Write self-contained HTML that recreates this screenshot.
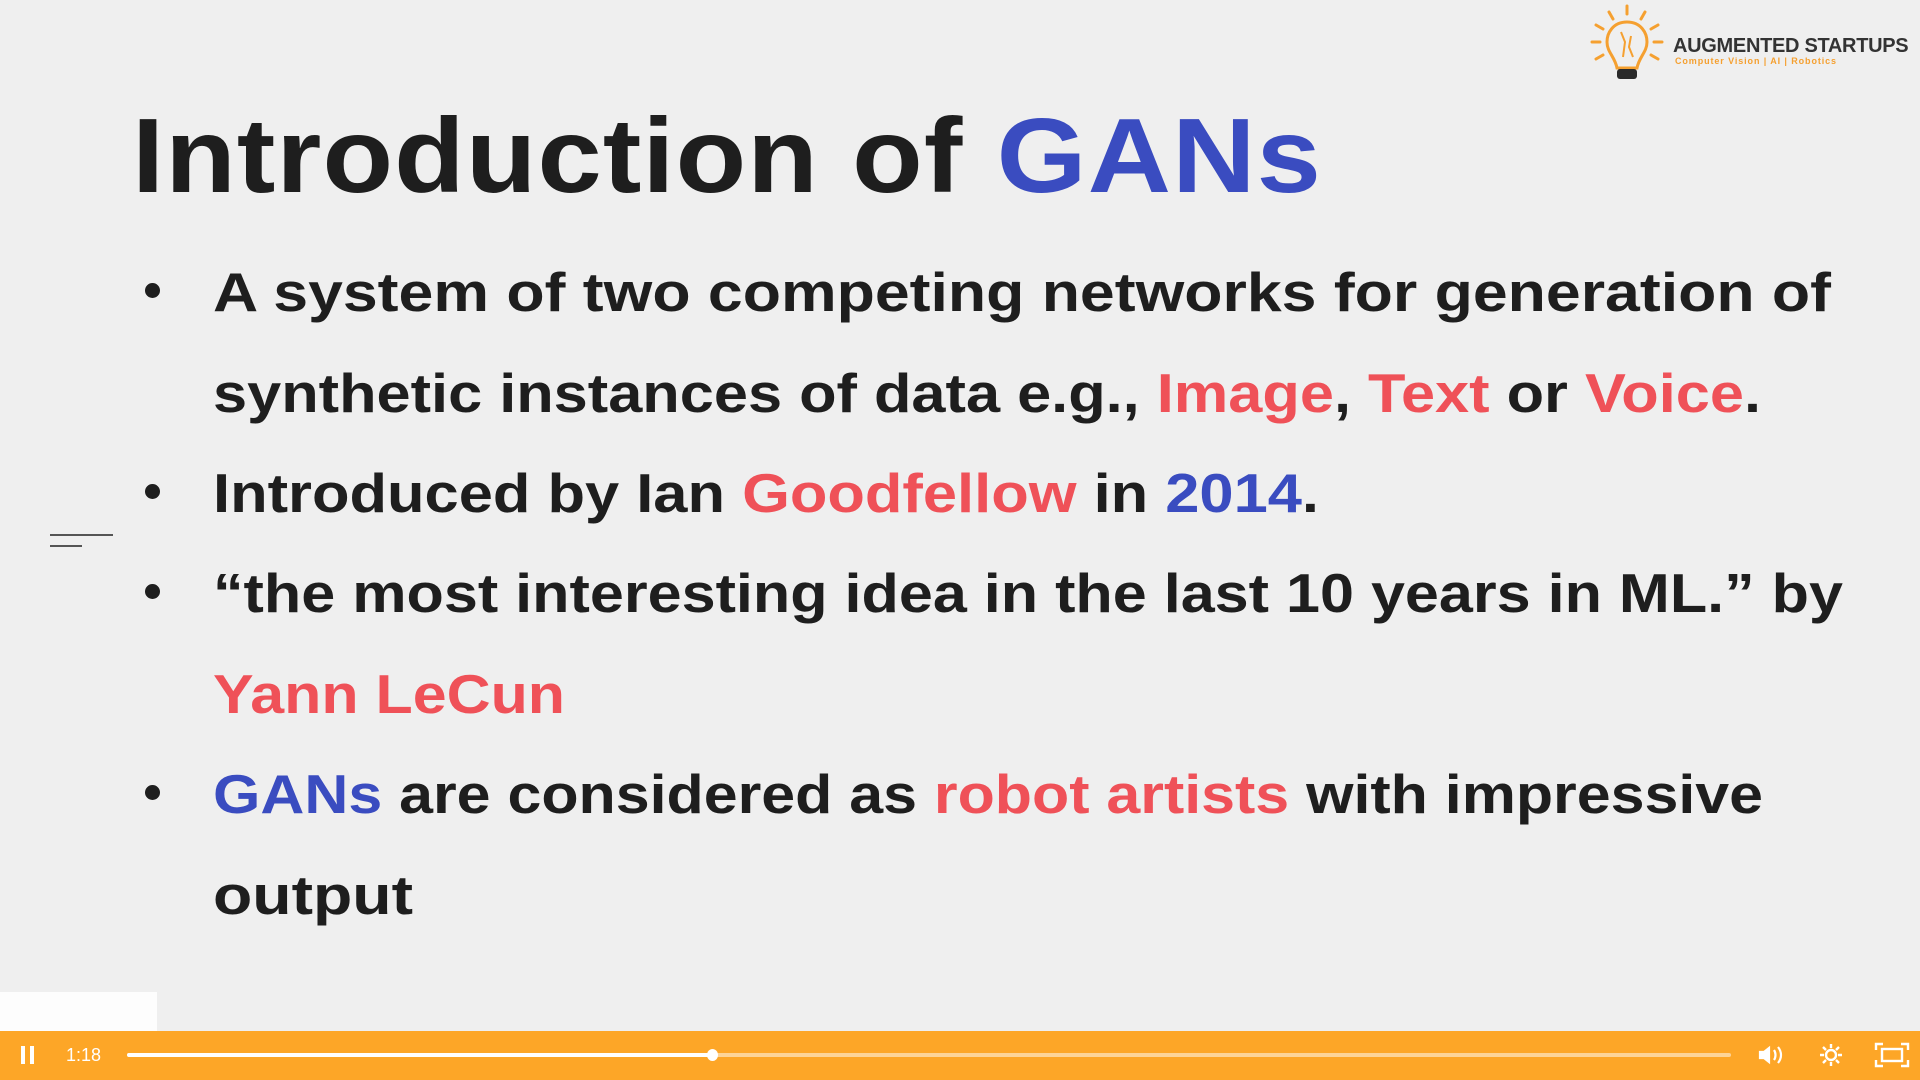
<!DOCTYPE html>
<html><head><meta charset="utf-8"><style>
*{margin:0;padding:0;box-sizing:border-box}
body{width:1920px;height:1080px;overflow:hidden;background:#efefef;position:relative;font-family:"Liberation Sans",sans-serif;font-weight:bold;color:#1e1e1e}
.l{position:absolute;white-space:nowrap;transform-origin:0 0}
.r{color:#ef5158}.b{color:#3a4cc0}
.dot{position:absolute;left:145px;width:15px;height:15px;border-radius:50%;background:#1e1e1e}
.t{font-size:55px;line-height:1}
</style></head><body>
<div class="l" id="title" data-w="1190" style="left:132px;top:103px;font-size:106px;line-height:1;letter-spacing:1px">Introduction of <span class="b">GANs</span></div>

<div class="dot" style="top:283px"></div>
<div class="dot" style="top:484px"></div>
<div class="dot" style="top:584px"></div>
<div class="dot" style="top:785px"></div>

<div class="l t" data-w="1618" style="left:213px;top:265px">A system of two competing networks for generation of</div>
<div class="l t" data-w="1548" style="left:213px;top:366px">synthetic instances of data e.g., <span class="r">Image</span>, <span class="r">Text</span> or <span class="r">Voice</span>.</div>
<div class="l t" data-w="1106" style="left:213px;top:466px">Introduced by Ian <span class="r">Goodfellow</span> in <span class="b">2014</span>.</div>
<div class="l t" data-w="1630" style="left:213px;top:566px">“the most interesting idea in the last 10 years in ML.” by</div>
<div class="l t r" data-w="352" style="left:213px;top:667px">Yann LeCun</div>
<div class="l t" data-w="1550" style="left:213px;top:767px"><span class="b">GANs</span> are considered as <span class="r">robot artists</span> with impressive</div>
<div class="l t" data-w="200" style="left:213px;top:868px">output</div>

<div style="position:absolute;left:50px;top:534px;width:63px;height:2px;background:#555"></div>
<div style="position:absolute;left:50px;top:545px;width:32px;height:2px;background:#555"></div>

<svg style="position:absolute;left:1585px;top:2px" width="90" height="86" viewBox="0 0 90 86">
<g stroke="#f5a030" stroke-width="3" stroke-linecap="round">
<line x1="42" y1="4" x2="42" y2="12"/><line x1="24" y1="10" x2="28" y2="17"/><line x1="60" y1="10" x2="56" y2="17"/>
<line x1="11" y1="23" x2="18" y2="27"/><line x1="73" y1="23" x2="66" y2="27"/><line x1="7" y1="40" x2="15" y2="40"/><line x1="77" y1="40" x2="69" y2="40"/>
<line x1="11" y1="57" x2="18" y2="53"/><line x1="73" y1="57" x2="66" y2="53"/></g>
<path d="M42 20 C28 20 22 31 22 40 C22 50 30 55 32 66 L52 66 C54 55 62 50 62 40 C62 31 56 20 42 20Z" fill="none" stroke="#f5a030" stroke-width="3"/>
<path d="M36 30 L40 40 L38 55 M46 34 L44 45 L48 55" stroke="#f5a030" stroke-width="2" fill="none"/>
<rect x="32" y="67" width="20" height="10" rx="3" fill="#2a2a2a"/>
</svg>
<div class="l" style="left:1673px;top:35px;font-size:20px;color:#333;letter-spacing:-0.3px">AUGMENTED STARTUPS</div>
<div class="l" style="left:1675px;top:56px;font-size:9px;color:#f5a030;letter-spacing:0.9px">Computer Vision | AI | Robotics</div>

<div style="position:absolute;left:0;top:992px;width:157px;height:40px;background:#fdfdfd"></div>

<div style="position:absolute;left:0;top:1031px;width:1920px;height:49px;background:#fda627"></div>
<div style="position:absolute;left:21px;top:1046px;width:4px;height:18px;background:#fff"></div>
<div style="position:absolute;left:30px;top:1046px;width:4px;height:18px;background:#fff"></div>
<div class="l" style="left:66px;top:1045px;font-size:18px;color:#fff;font-weight:normal">1:18</div>
<div style="position:absolute;left:127px;top:1053px;width:1604px;height:4px;background:#fdd497;border-radius:2px"></div>
<div style="position:absolute;left:127px;top:1053px;width:586px;height:4px;background:#fff;border-radius:2px"></div>
<div style="position:absolute;left:707px;top:1049px;width:11px;height:12px;border-radius:50%;background:#fff"></div>
<svg style="position:absolute;left:1758px;top:1043px" width="30" height="24" viewBox="0 0 30 24" fill="none" stroke="#fff" stroke-width="2.2"><path d="M2 9h4l5-4v14l-5-4H2z" fill="#fff"/><path d="M16 7c2 3 2 7 0 10M20 4c4 5 4 11 0 16"/></svg>
<svg style="position:absolute;left:1818px;top:1042px" width="26" height="26" viewBox="0 0 26 26" fill="none" stroke="#fff" stroke-width="2.4"><circle cx="13" cy="13" r="5"/><path d="M13 2v4M13 20v4M2 13h4M20 13h4M5 5l3 3M18 18l3 3M5 21l3-3M18 8l3-3"/></svg>
<svg style="position:absolute;left:1874px;top:1042px" width="36" height="26" viewBox="0 0 36 26" fill="none" stroke="#fff" stroke-width="2.4"><path d="M2 8V2h7M27 2h7v6M34 18v6h-7M9 24H2v-6"/><rect x="8" y="7" width="20" height="12"/></svg>

<script>
document.querySelectorAll('[data-w]').forEach(e=>{var w=+e.dataset.w,c=e.getBoundingClientRect().width;if(c>0)e.style.transform='scaleX('+(w/c)+')';});
</script>
</body></html>
